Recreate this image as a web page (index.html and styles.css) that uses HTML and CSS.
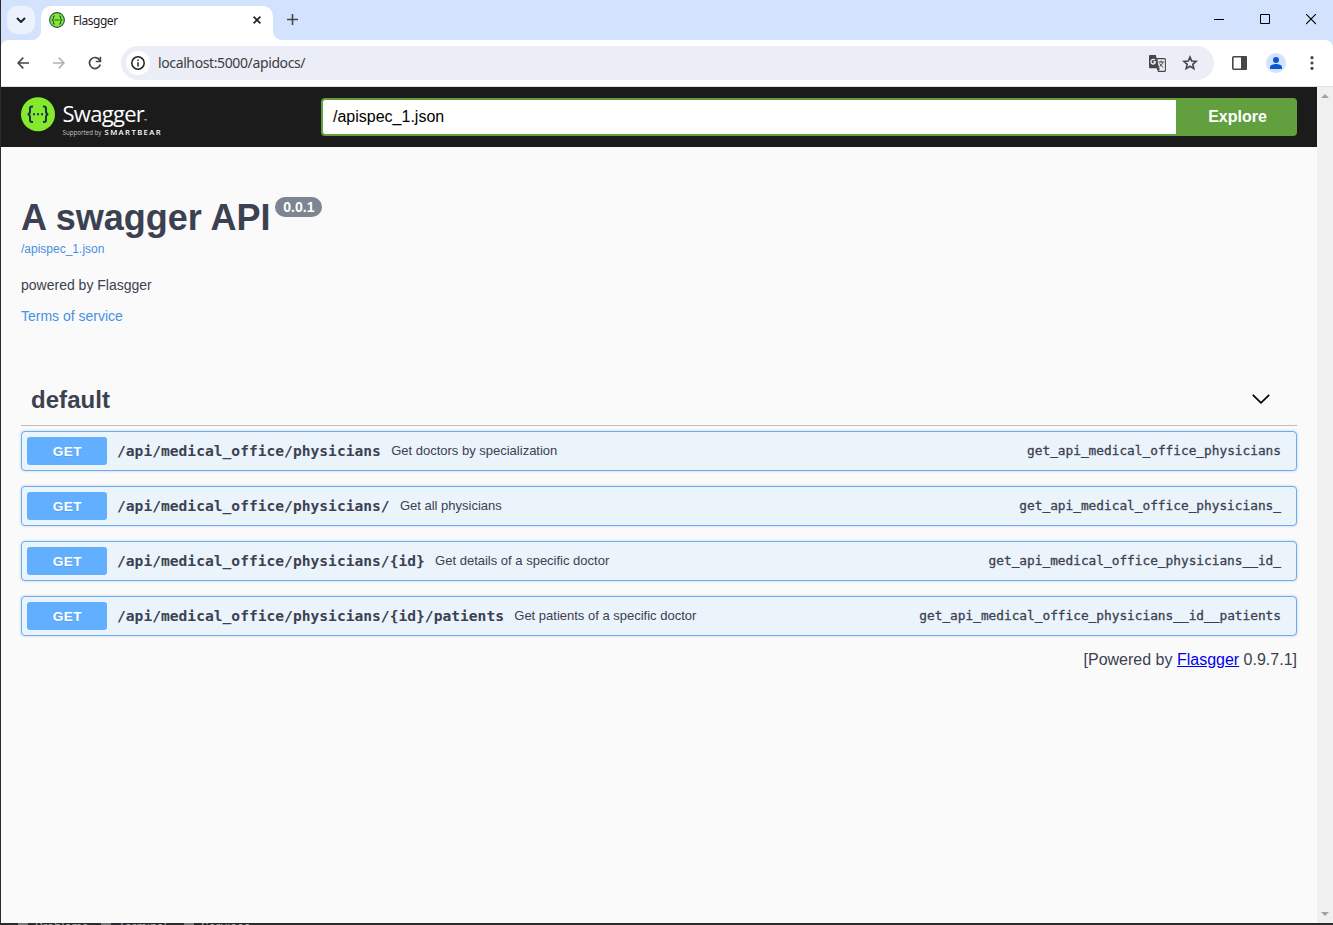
FILE: index.html
```
<!DOCTYPE html>
<html lang="en">
<head>
<meta charset="utf-8">
<title>Flasgger</title>
<link rel="stylesheet" href="styles.css">
</head>
<body>
<div class="window">
  <header class="tabstrip">
    <button class="tab-search"><svg width="10" height="6" viewBox="0 0 10 6"><path d="M1 1l4 4 4-4" fill="none" stroke="#1f2023" stroke-width="2"/></svg></button>
    <div class="tab">
      <svg width="16" height="16" viewBox="0 0 16 16"><circle cx="8" cy="8" r="7.4" fill="#85ea2d" stroke="#2d5750" stroke-width="1.1"/><path d="M6 4H5.2Q4.4 4 4.4 5v1.8L3.2 8l1.2 1.2V11q0 1 .8 1H6M10 4h.8q.8 0 .8 1v1.8L12.8 8l-1.2 1.2V11q0 1-.8 1H10M5.5 8h5" fill="none" stroke="#2d5750" stroke-width="1.1"/></svg>
      <span class="tab-title">Flasgger</span>
      <svg class="tab-close" width="8" height="8" viewBox="0 0 8 8"><path d="M.6.6l6.8 6.8M7.4.6L.6 7.4" stroke="#1f2023" stroke-width="1.6"/></svg>
    </div>
    <svg class="new-tab" width="11" height="11" viewBox="0 0 11 11"><path d="M5.5 0v11M0 5.5h11" stroke="#444746" stroke-width="1.6"/></svg>
    <div class="window-buttons">
      <svg width="10" height="11" viewBox="0 0 10 11"><path d="M0 5.5h10" stroke="#000"/></svg>
      <svg width="10" height="11" viewBox="0 0 10 11"><path d="M.5.5h9v9h-9z" fill="none" stroke="#000"/></svg>
      <svg width="10" height="11" viewBox="0 0 10 11"><path d="M0 0l10 10M10 0L0 10" stroke="#000" stroke-width="1.1"/></svg>
    </div>
  </header>
  <nav class="toolbar">
    <svg class="nav-icon" width="12" height="12" viewBox="0 0 12 12"><path d="M12 6H1M6.3.6L1 6l5.3 5.4" fill="none" stroke="#444746" stroke-width="1.6"/></svg>
    <svg class="nav-icon" width="12" height="12" viewBox="0 0 12 12"><path d="M0 6h11M5.7.6L11 6l-5.3 5.4" fill="none" stroke="#b0b1b2" stroke-width="1.6"/></svg>
    <svg class="nav-icon" width="14" height="14" viewBox="0 0 14 14"><path d="M12.300 8.500A5.500 5.500 0 1 1 11.800 4.300L12.500 5.500" fill="none" stroke="#444746" stroke-width="1.700"/><path d="M13.200.8v5.400H7.800V4.700h3.800V.8z" fill="#444746"/></svg>
    <div class="omnibox">
      <span class="site-info"><svg width="14" height="14" viewBox="0 0 14 14"><circle cx="7" cy="7" r="6.200" fill="none" stroke="#1f2023" stroke-width="1.500"/><path d="M7 6.200V10.500M7 3.500V5" stroke="#1f2023" stroke-width="1.500"/></svg></span>
      <span class="url">localhost:5000/apidocs/</span>
      <svg class="translate" width="17" height="17" viewBox="0 0 17 17"><path d="M8 3.600h7.400a1 1 0 0 1 1 1v10.800a1 1 0 0 1-1 1H9.500L8 13z" fill="#ebeef7" stroke="#444746" stroke-width="1.100"/><path d="M1 0h5.800l3.400 13.300H1a1 1 0 0 1-1-1V1a1 1 0 0 1 1-1z" fill="#444746"/><path d="M8 13.200h3.200L9.400 16z" fill="#444746"/><path d="M6 5.200A2.300 2.300 0 1 0 6.500 7H4.400" fill="none" stroke="#ebeef7" stroke-width="1.300"/><path d="M9.300 7h5.700M12.100 5.600V7M13.900 7Q13 10 10.500 11.800M10.700 8.500q1 2.200 3.600 4" fill="none" stroke="#444746"/></svg>
      <svg class="star" width="16" height="16" viewBox="0 0 16 16"><path d="M8 2l1.700 4 4.400.4-3.300 2.900 1 4.300L8 11.300l-3.800 2.300 1-4.300-3.300-2.900L6.300 6z" fill="none" stroke="#444746" stroke-width="1.600"/></svg>
    </div>
    <svg class="panel-icon" width="15" height="14" viewBox="0 0 15 14"><rect x=".8" y=".8" width="13.400" height="12.400" rx="1" fill="none" stroke="#444746" stroke-width="1.600"/><path d="M9 0h5a1 1 0 0 1 1 1v12a1 1 0 0 1-1 1H9z" fill="#444746"/></svg>
    <svg class="profile" width="20" height="20" viewBox="0 0 20 20"><circle cx="10" cy="10" r="10" fill="#d3e3fd"/><circle cx="10" cy="7" r="3" fill="#0b57d0"/><path d="M4 16v-1.800C4 12 7.500 11 10 11s6 1 6 3.200V16z" fill="#0b57d0"/></svg>
    <svg class="more" width="4" height="14" viewBox="0 0 4 14"><circle cx="2" cy="1.700" r="1.600" fill="#444746"/><circle cx="2" cy="7" r="1.600" fill="#444746"/><circle cx="2" cy="12.300" r="1.600" fill="#444746"/></svg>
  </nav>
  <div class="viewport">
    <main class="page">
      <div class="topbar">
        <div class="brand">
          <svg width="34" height="35" viewBox="0 -.2 34 35"><circle cx="17" cy="17" r="17" fill="#85ea2d"/><path d="M12 9.200h-1q-2 0-2 2v3q0 2.300-2.200 2.800Q9 17.500 9 19.800v3q0 2 2 2h1M22 9.200h1q2 0 2 2v3q0 2.300 2.200 2.800-2.200.5-2.200 2.800v3q0 2-2 2h-1" fill="none" stroke="#173647" stroke-width="2"/><path d="M12 16h2v2h-2zM16 16h2v2h-2zM20 16h2v2h-2z" fill="#173647"/></svg>
          <div class="brand-text">
            <div class="brand-name">Swagger<span class="tm">™</span></div>
            <div class="brand-sub"><span class="by">Supported by</span><b>SMARTBEAR</b></div>
          </div>
        </div>
        <div class="spec-form">
          <div class="spec-input">/apispec_1.json</div>
          <button class="explore">Explore</button>
        </div>
      </div>
      <section class="info">
        <div class="title-row"><h1>A swagger API</h1><span class="version">0.0.1</span></div>
        <a class="spec-link">/apispec_1.json</a>
        <p class="description">powered by Flasgger</p>
        <a class="terms">Terms of service</a>
      </section>
      <section class="operations">
        <div class="tag"><h2>default</h2><svg width="18" height="10" viewBox="0 0 18 10"><path d="M.8.8L9 8.800 17.200.8" fill="none" stroke="#000" stroke-width="1.700"/></svg></div>
        <div class="op"><span class="method">GET</span><span class="path">/api/medical_office/physicians</span><span class="summary">Get doctors by specialization</span><span class="op-id">get_api_medical_office_physicians</span></div>
        <div class="op"><span class="method">GET</span><span class="path">/api/medical_office/physicians/</span><span class="summary">Get all physicians</span><span class="op-id">get_api_medical_office_physicians_</span></div>
        <div class="op"><span class="method">GET</span><span class="path">/api/medical_office/physicians/{id}</span><span class="summary">Get details of a specific doctor</span><span class="op-id">get_api_medical_office_physicians__id_</span></div>
        <div class="op"><span class="method">GET</span><span class="path">/api/medical_office/physicians/{id}/patients</span><span class="summary">Get patients of a specific doctor</span><span class="op-id">get_api_medical_office_physicians__id__patients</span></div>
      </section>
      <footer class="powered">[Powered by <a>Flasgger</a> 0.9.7.1]</footer>
    </main>
    <div class="scrollbar">
      <svg width="8" height="4" viewBox="0 0 8 4"><path d="M0 4l4-4 4 4z" fill="#a3a3a3"/></svg>
      <svg width="8" height="4" viewBox="0 0 8 4"><path d="M0 0l4 4 4-4z" fill="#a3a3a3"/></svg>
    </div>
  </div>
</div>
<div class="desktop-edge"><i></i><span>Problems</span><i></i><span>Terminal</span><i></i><span>Services</span></div>
</body>
</html>
```
FILE: styles.css
```
* { box-sizing: border-box; }
body { margin: 0; width: 1333px; height: 925px; overflow: hidden; background: #2b2b2d; font-family: "Liberation Sans", Arial, sans-serif; color: #3b4151; }
svg { display: block; flex: none; }
button { border: 0; padding: 0; font-family: inherit; }
.window { height: 923px; margin-left: 1px; display: flex; flex-direction: column; background: linear-gradient(#d3e3fd 50px, #fff 50px); }
.desktop-edge { height: 2px; background: #2b2b2d; overflow: hidden; display: flex; padding-left: 18px; color: #a9a9ab; font: 12px/14px Inter, sans-serif; }
.desktop-edge i { width: 10px; height: 2px; margin-right: 7px; background: #77787a; flex: none; }
.desktop-edge span { width: 66px; margin-top: -3px; }

.tabstrip { height: 40px; flex: none; display: flex; align-items: flex-start; padding: 6px 17px 0 6px; }
.tab-search { width: 28px; height: 28px; border-radius: 10px; background: #ebf2fe; display: flex; align-items: center; justify-content: center; }
.tab { position: relative; width: 232px; height: 34px; margin-left: 6px; background: #fff; border-radius: 10px 10px 0 0; display: flex; align-items: center; padding: 0 12px 6px 8px; }
.tab::before, .tab::after { content: ""; position: absolute; bottom: 0; width: 10px; height: 10px; }
.tab::before { left: -10px; background: radial-gradient(circle at 0 0, transparent 10px, #fff 10.5px); }
.tab::after { right: -10px; background: radial-gradient(circle at 100% 0, transparent 10px, #fff 10.5px); }
.tab-title { margin-left: 8px; font: 12px/16px "Noto Sans", sans-serif; letter-spacing: -.45px; color: #1f2023; padding-top: 1px; }
.tab-close { margin-left: auto; }
.new-tab { margin: 8px 0 0 14px; }
.window-buttons { margin: 8px 0 0 auto; display: flex; gap: 36px; }

.toolbar { height: 47px; flex: none; background: #fff; border-bottom: 1px solid #dcdfe3; border-radius: 8px 8px 0 0; display: flex; align-items: center; padding: 0 19px 0 16px; }
.nav-icon { margin-right: 24px; }
.nav-icon:nth-child(3) { margin: 0 19px 0 -1px; }
.omnibox { width: 1093px; height: 34px; border-radius: 17px; background: #ebeef7; display: flex; align-items: center; padding: 0 16px 0 5px; }
.site-info { width: 24px; height: 24px; border-radius: 50%; background: #fff; display: flex; align-items: center; justify-content: center; }
.url { margin-left: 8px; font: 14px/20px "Noto Sans", sans-serif; letter-spacing: -.38px; color: #3c3d40; }
.translate { margin: 0 16px 0 auto; }
.star { margin-bottom: 1px; }
.panel-icon { margin-left: 18px; }
.profile { margin-left: 19px; }
.more { margin-left: auto; }

.viewport { flex: 1; display: flex; min-height: 0; }
.page { flex: 1; background: #fafafa; }
.scrollbar { width: 16px; background: #f0f0f0; display: flex; flex-direction: column; justify-content: space-between; align-items: center; padding: 7px 0; }

.topbar { height: 60px; background: #1b1b1b; padding: 10px 20px; display: flex; }
.brand { width: 300px; display: flex; }
.brand-text { margin-left: 7.500px; color: #fff; font-family: "Open Sans", sans-serif; }
.brand-name { font-size: 22px; line-height: 28px; height: 31px; padding-top: 2px; letter-spacing: -.72px; }
.tm { font-size: 4px; letter-spacing: 0; }
.brand-sub { display: flex; align-items: center; font-size: 6.200px; line-height: 9px; }
.by { width: 42px; color: #c4c4c4; white-space: nowrap; }
.brand-sub b { font-size: 7.700px; font-weight: 600; letter-spacing: 1.400px; }
.spec-form { flex: 1; height: 38px; margin-top: 1px; display: flex; }
.spec-input { flex: 1; border: 2px solid #62a03f; border-right: 0; border-radius: 4px 0 0 4px; background: #fff; color: #000; font-size: 16px; line-height: 34px; padding-left: 10px; }
.explore { width: 121px; background: #62a03f; color: #fff; font-size: 16px; font-weight: 700; border-radius: 0 4px 4px 0; padding-left: 2px; }

.info { height: 226px; padding: 50px 20px 0; display: flex; flex-direction: column; align-items: flex-start; }
.title-row { display: flex; align-items: flex-start; }
h1 { margin: 0; font-size: 36px; line-height: 41px; }
.version { margin-left: 5px; width: 47px; height: 20px; border-radius: 20px; background: #7d8492; color: #fff; font-size: 14px; line-height: 20px; font-weight: 700; text-align: center; }
.spec-link { font-size: 12px; line-height: 14px; margin-top: 4px; color: #4990e2; }
.description { font-size: 14px; line-height: 16px; margin: 21px 0 15px; }
.terms { font-size: 14px; line-height: 16px; color: #4990e2; }

.operations { margin: 0 20px; display: flex; flex-direction: column; gap: 15px; }
.tag { height: 53px; margin-bottom: -10px; border-bottom: 1px solid #bbbdc1; display: flex; align-items: center; justify-content: space-between; padding: 0 27px 0 10px; }
h2 { margin: 0; padding-top: 2px; font-size: 24px; line-height: 28px; letter-spacing: .05px; }
.op { height: 40px; border: 1px solid #61affe; border-radius: 4px; background: #ebf3fb; box-shadow: 0 0 3px rgba(0,0,0,.19); display: flex; align-items: center; padding: 0 15px 0 5px; white-space: nowrap; }
.method { width: 80px; height: 28px; border-radius: 3px; background: #61affe; color: #fff; font-size: 13.500px; letter-spacing: .5px; line-height: 29px; padding-left: 1px; font-weight: 700; text-align: center; text-shadow: 0 1px 0 rgba(0,0,0,.1); }
.path { margin-left: 10px; font: 700 14.610px/20px "DejaVu Sans Mono", monospace; }
.summary { margin-left: 10.250px; font-size: 13px; line-height: 16px; padding-bottom: 1px; }
.op-id { margin-left: auto; font: 12.790px/18px "DejaVu Sans Mono", monospace; -webkit-text-stroke: .3px #3b4151; padding-bottom: 1px; }
.powered { margin: 14px 20px 0; font-size: 16px; line-height: 20px; text-align: right; }
.powered a { color: #0000ee; text-decoration: underline; }
```
